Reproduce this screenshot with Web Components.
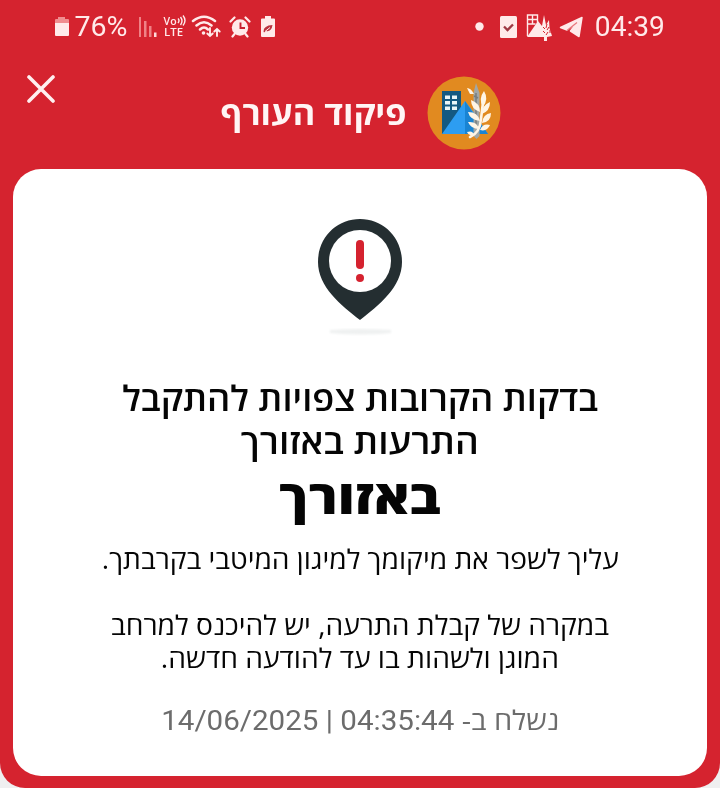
<!DOCTYPE html>
<html lang="he">
<head>
<meta charset="utf-8">
<title>פיקוד העורף</title>
<style>
html,body{margin:0;background:#efeff0}
body{font-family:"Open Sans","Noto Sans","DejaVu Sans",sans-serif}
</style>
</head>
<body>
<alert-screen></alert-screen>
<script>
const define=(name,html,init)=>customElements.define(name,class extends HTMLElement{
  connectedCallback(){
    if(this.shadowRoot)return;
    this.attachShadow({mode:'open'}).innerHTML=html;
    if(init)init(this);
  }
});

/* One line of text, stretched so that it fills the given width. */
define('text-line',`<style>
:host{display:flex;justify-content:center;white-space:pre;width:100%}
span{display:block;flex:none}
</style><span><slot></slot></span>`,el=>{
  const s=el.shadowRoot.querySelector('span'),w=+el.getAttribute('width');
  const natural=s.getBoundingClientRect().width;
  if(w)s.style.transform='scaleX('+(w/natural).toFixed(4)+')';
});

define('status-bar',`<style>
:host{display:flex;align-items:center;justify-content:space-between;box-sizing:border-box;height:52px;padding:1px 55px 0 54px;color:#ffeaea;font-family:Roboto,sans-serif}
svg{display:block;flex:none}
.side{display:flex;align-items:center}
.num{font-size:28px;line-height:30px;height:30px}
.lte{display:flex;flex-direction:column;font:600 11.5px/11px "Open Sans",sans-serif;width:22px;height:23px}
.vo{display:flex}
</style>
<div class="side">
<svg width="16" height="22" viewBox="0 0 16 22"><path fill="#f08d90" d="M4 1h7v2h3q1 0 1 1v3H1V4q0-1 1-1h2z"/><path fill="#ffeaea" d="M1 7h14v12q0 1-1 1H2q-1 0-1-1z"/></svg>
<text-line class="num" width="53" style="width:54px;margin-left:4px">76%</text-line>
<svg style="margin-left:10px" width="20" height="22" viewBox="0 0 20 22"><g fill="#ef8286"><path d="M1 1h2v20H1zM6 5h2.500v16H6zM11 10h2.500v11H11z"/></g><path fill="#ffdada" d="M16 16.500h2.500V21H16z"/></svg>
<div class="lte" style="margin-left:6px"><div class="vo"><text-line width="13" style="width:13px">Vo</text-line><svg width="9" height="11" viewBox="0 0 9 11"><path d="M1 3.500q2 2 0 4.500M3.500 2q3 4 0 8M6 .5q4 5 0 10" fill="none" stroke="#ffeaea" stroke-width="1.400"/></svg></div><text-line width="19" style="width:20px">LTE</text-line></div>
<svg style="margin-left:5px" width="31" height="26" viewBox="0 0 31 26"><g fill="none" stroke="#ffeaea" stroke-width="2.500" stroke-linecap="round"><path d="M2 7Q13-1.500 24 7M5.500 11.500Q13 5 20.500 11.500M9 15.500q4-4 8 0"/><path d="M19 14v8m-2.700-2.500L19 22l2.700-2.500M26 22v-7m-2.700 2.500L26 15l2.700 2.500" stroke-width="1.900"/></g><circle cx="12.500" cy="19" r="1.800" fill="#ffeaea"/></svg>
<svg style="margin-left:7px" width="22" height="22" viewBox="0 0 22 22"><circle cx="11" cy="11.500" r="8.200" fill="#ffeaea"/><path d="M1.500 5.500l4-4M16.500 1.500l4 4M5.500 18l-2 2.500M16.500 18l2 2.500" stroke="#ffeaea" stroke-width="2.200" stroke-linecap="round"/><path d="M11.500 6.500v5.500h4.500" fill="none" stroke="#c92030" stroke-width="1.900"/></svg>
<svg style="margin-left:9px" width="16" height="22" viewBox="0 0 16 22"><path fill="#ffeaea" d="M5 0h6v2.500h3q1 0 1 1V20q0 1-1 1H2q-1 0-1-1V3.500q0-1 1-1h3z"/><path fill="#ba3340" d="M3.500 15.500q0-6 9-6.500-1 7-6.500 6l-2 1.500z"/><path d="M5 15.500l5-4" stroke="#ffeaea"/></svg>
</div>
<div class="side">
<svg width="9" height="9"><circle cx="4.500" cy="4.500" r="4.200" fill="#ffeaea"/></svg>
<svg style="margin-left:15px" width="19" height="22" viewBox="0 0 19 22"><rect x="1" width="17" height="22" rx="1.500" fill="#ffeaea"/><path d="M5 10.500l3.500 3.500L14 8.500" fill="none" stroke="#9e3843" stroke-width="2.300"/></svg>
<svg style="margin-left:8px" width="26" height="28" viewBox="0 0 26 28"><path d="M1.500 23V2h10v10M1.500 6.500h10M6.500 2v9M1.500 11h8" fill="none" stroke="#ffeaea" stroke-width="1.400"/><path d="M1 24L12 8l4 5 2-11 2 10 3-5 .5 8L26 23l-5 1v4h-3v-4z" fill="#ffeaea"/><path d="M17 14l2 2m2-5l-1 4m3-1l-2 3m-4 1l2 2m3-1l-2 3m4-5v3" stroke="#d5222f" stroke-width="1"/></svg>
<svg style="margin-left:6px" width="26" height="22" viewBox="0 0 26 22"><path d="M2.500 11.500L24 1.500 21 20.500 12.500 15 19 6.500 9 14z" fill="#ffeaea" stroke="#ffeaea" stroke-width="1.500" stroke-linejoin="round"/><path d="M19 6.500L9 14.500" stroke="#e8777d" stroke-width="1.200"/></svg>
<text-line class="num" width="70" style="width:71px;margin-left:10px">04:39</text-line>
</div>`);

define('command-logo',`<style>:host{display:block;width:74px;height:74px}svg{display:block}</style>
<svg width="74" height="74" viewBox="0 0 74 74"><circle cx="37" cy="37" r="36.500" fill="#e18a20"/>
<path d="M15 15h19v43H15z" fill="#145981"/><path d="M15 58L38 25l10 13 13 20z" fill="#2d9df1"/><path d="M38 25v33h23L46 37z" fill="#1984d3"/>
<path fill="#e9f5f7" d="M18 19.500h5V23h-5zM25 19.500h5V23h-5zM18 25h5v3.500h-5zM25 25h5v3.500h-5zM18 30.500h5V34h-5zM25 30.500h5V34h-5z"/>
<path d="M46.500 17l2.500-10 3.500 10v43l-3 3-3-3z" fill="#a2a7a6"/><path d="M47 20l4 2M47 48l4 3M49 17v34" stroke="#777d7f" stroke-width="1.500"/>
<path d="M43 61Q53 57 54 43L56 26" fill="none" stroke="#fff5e6" stroke-width="2.600" stroke-linecap="round"/>
<g fill="#fff5e6"><path d="M56 31q-5-8 1-16 5 8-1 16zM53 36q-9-3-9-12 9 3 9 12zM55 38q0-9 8-12 0 9-8 12zM53 45q-10-1-12-9 10 0 12 9zM55 47q1-9 9-10 0 9-9 10zM52 53q-8 0-11-7 9-1 11 7zM53 54q3-7 10-5-3 7-10 5zM47 59q-5 1-7-3 6-2 7 3zM47 18q-3-6-7-6l3 6z"/></g>
</svg>`);

define('alert-header',`<style>
:host{display:grid;grid-template-columns:27px 28px 1fr;height:117px;box-sizing:border-box;color:#fff5f5}
.close{grid-column:2;margin-top:23px}
.brand{display:flex;align-items:flex-start;padding:24px 0 0 165px;gap:20px}
.title{font-size:33px;line-height:46px;font-weight:700;width:187px;margin-top:14px}
svg{display:block}
</style>
<svg class="close" width="28" height="28" viewBox="0 0 28 28"><path d="M2 2l24 24M26 2L2 26" stroke="#fff0f0" stroke-width="3.600" stroke-linecap="round"/></svg>
<div class="brand"><text-line class="title" dir="rtl" width="186">פיקוד העורף</text-line><command-logo></command-logo></div>`);

define('alert-pin',`<style>:host{display:block}svg{display:block}</style>
<svg width="100" height="126" viewBox="310 213 100 126"><defs><filter id="s"><feGaussianBlur stdDeviation="1"/></filter></defs>
<path d="M360 219C337 219 318 237 318 262C318 287 341 305 360 320C379 305 402 287 402 262C402 237 383 219 360 219Z" fill="#242e31"/><circle cx="360" cy="261" r="31" fill="#fff"/>
<rect x="356" y="240" width="8" height="29" rx="4" fill="#d5222f"/><circle cx="360" cy="278" r="4" fill="#d5222f"/>
<path d="M330 330q30-2 61 0v3q-30 3-61 0z" fill="#eff1f1" filter="url(#s)"/></svg>`);

define('alert-card',`<style>
:host{display:flex;flex-direction:column;align-items:center;box-sizing:border-box;width:694px;height:607px;margin:0 13px;padding-top:44px;background:#fff;border-radius:28px;color:#050505}
h1,h2,p,footer{margin:0;width:100%;direction:rtl;font-weight:400}
h1{font-size:34.5px;line-height:43px;font-weight:650;margin-top:37px}
h2{font-size:47px;line-height:60px;font-weight:800;margin-top:4px}
p{font-size:26.5px;line-height:33px}
.first{margin-top:17px}.second{margin-top:33px}
footer{font-size:27px;line-height:34px;margin-top:28px;color:#6c6c6c}
bdi{font-family:Roboto,sans-serif;font-size:27.5px;line-height:1}
</style>
<alert-pin></alert-pin>
<h1><text-line width="476">בדקות הקרובות צפויות להתקבל</text-line><text-line width="238">התרעות באזורך</text-line></h1>
<h2><text-line width="161">באזורך</text-line></h2>
<p class="first"><text-line width="517">עליך לשפר את מיקומך למיגון המיטבי בקרבתך.</text-line></p>
<p class="second"><text-line width="498">במקרה של קבלת התרעה, יש להיכנס למרחב</text-line><text-line width="398">המוגן ולשהות בו עד להודעה חדשה.</text-line></p>
<footer><text-line width="398">נשלח ב- <bdi dir="ltr">14/06/2025 | 04:35:44</bdi></text-line></footer>`);

define('alert-screen',`<style>:host{display:block;box-sizing:border-box;width:720px;height:788px;background:#d5232f;border-radius:0 0 25px 25px;overflow:hidden}</style>
<status-bar></status-bar><alert-header></alert-header><alert-card></alert-card>`);
</script>
</body>
</html>
